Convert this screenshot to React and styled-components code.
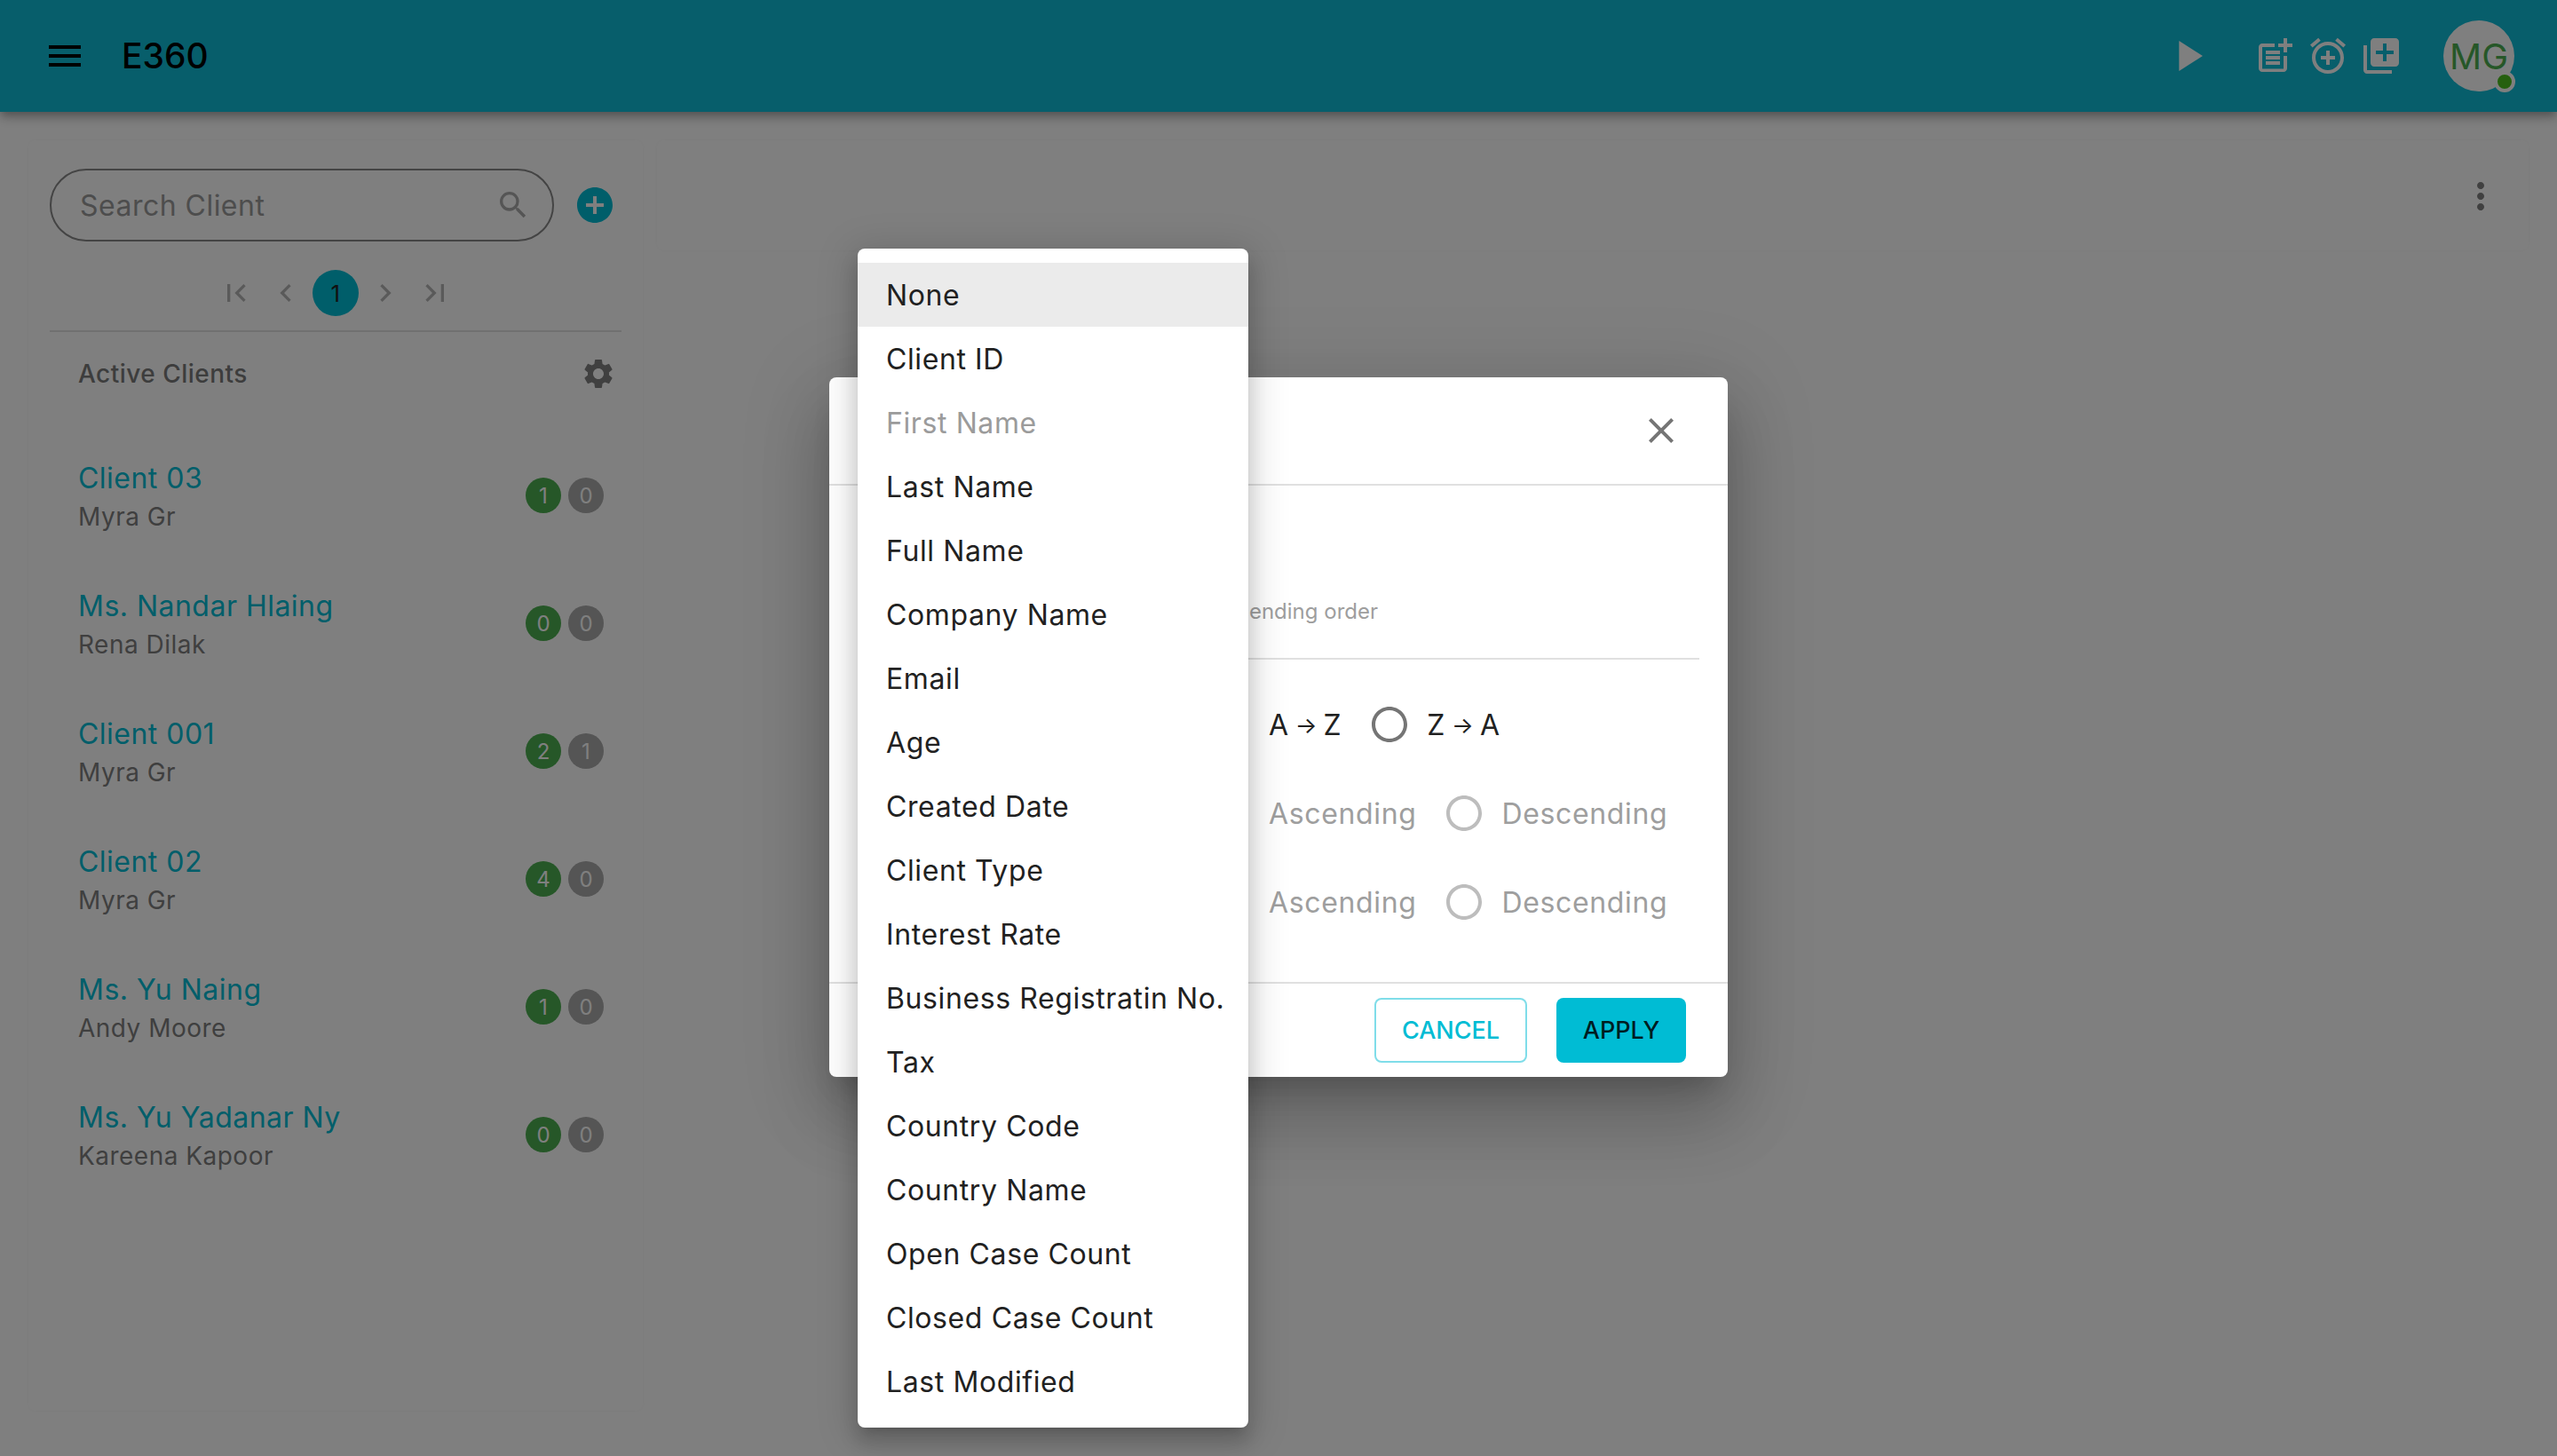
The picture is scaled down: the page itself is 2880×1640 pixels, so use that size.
import React from 'react';
import styled, { createGlobalStyle } from 'styled-components';
import {
    MdMenu,
    MdPlayArrow,
    MdPostAdd,
    MdAlarmAdd,
    MdLibraryAdd,
    MdSearch,
    MdAddCircle,
    MdFirstPage,
    MdLastPage,
    MdChevronLeft,
    MdChevronRight,
    MdSettings,
    MdMoreVert,
    MdClose,
    MdRadioButtonUnchecked
} from 'react-icons/md';

const GlobalStyle = createGlobalStyle`
    html, body {
        margin: 0;
        padding: 0;
        background: #fff;
        font-family: Inter, "Noto Sans", sans-serif;
    }
`;

const Page = styled.div`
    position: relative;
    width: 2880px;
    height: 1640px;
    overflow: hidden;
    background: #fff;
`;

const Header = styled.header`
    display: flex;
    align-items: center;
    height: 126px;
    padding: 0 48px 0 49px;
    box-sizing: border-box;
    background: #0fbcd6;
    box-shadow: 0 4px 8px -2px rgba(0, 0, 0, 0.2), 0 8px 10px 0 rgba(0, 0, 0, 0.14), 0 2px 20px 0 rgba(0, 0, 0, 0.12);
    position: relative;
`;

const Brand = styled.span`
    margin-left: 40px;
    padding-bottom: 2px;
    font-size: 39px;
    font-weight: 500;
    color: #000;
`;

const HeaderIcons = styled.div`
    display: flex;
    align-items: center;
    gap: 12px;
    margin-left: auto;
    color: #fff;
`;

const PlayIcon = styled(MdPlayArrow)`
    margin-right: 33px;
`;

const Avatar = styled.div`
    position: relative;
    display: flex;
    align-items: center;
    justify-content: center;
    width: 80px;
    height: 80px;
    margin-left: 34px;
    border-radius: 50%;
    background: #fff;
    color: #4caf50;
    font-size: 40px;
`;

const StatusDot = styled.span`
    position: absolute;
    right: -1px;
    bottom: -1px;
    width: 16px;
    height: 16px;
    border: 4px solid #fff;
    border-radius: 50%;
    background: #4cc11f;
`;

const Main = styled.main`
    display: flex;
    align-items: flex-start;
    gap: 16px;
    height: 1514px;
    padding: 32px;
    box-sizing: border-box;
    letter-spacing: 0.03em;
`;

const ClientPanel = styled.aside`
    width: 692px;
    height: 1431px;
    padding: 32px 24px;
    box-sizing: border-box;
    border-radius: 8px;
    background: #fff;
    box-shadow: 0 0 4px rgba(0, 0, 0, 0.04);
`;

const DetailPanel = styled.section`
    flex: 1;
    display: flex;
    justify-content: flex-end;
    height: 124px;
    padding: 39px 30px 0 0;
    box-sizing: border-box;
    border-radius: 8px;
    background: #fff;
    box-shadow: 0 0 4px rgba(0, 0, 0, 0.04);
`;

const MoreIcon = styled(MdMoreVert)`
    color: #808080;
`;

const SearchRow = styled.div`
    display: flex;
    align-items: center;
    gap: 22px;
`;

const SearchBox = styled.div`
    display: flex;
    align-items: center;
    justify-content: space-between;
    width: 568px;
    height: 82px;
    padding: 0 24px 0 32px;
    box-sizing: border-box;
    border: 2px solid #888;
    border-radius: 41px;
    font-size: 32px;
    color: #9a9a9a;
`;

const SearchIcon = styled(MdSearch)`
    color: #aaa;
`;

const AddIcon = styled.span`
    display: flex;
    color: #00bcd4;
`;

const Pager = styled.nav`
    display: flex;
    align-items: center;
    justify-content: center;
    gap: 4px;
    margin-top: 32px;
    padding-bottom: 16px;
    border-bottom: 2px solid #e0e0e0;
`;

const PageButton = styled.span`
    display: flex;
    align-items: center;
    justify-content: center;
    width: 52px;
    height: 52px;
    border-radius: 50%;
    font-size: 26px;
    color: ${p => (p.$active ? '#222' : '#b5b5b5')};
    background: ${p => (p.$active ? '#00bcd4' : 'transparent')};
`;

const ListHead = styled.div`
    display: flex;
    align-items: center;
    justify-content: space-between;
    height: 94px;
    padding: 0 6px 0 32px;
    font-size: 28px;
    font-weight: 500;
    color: #7a7a7a;
`;

const GearIcon = styled(MdSettings)`
    color: #808080;
`;

const ClientList = styled.ul`
    margin: 18px 0 0;
    padding: 0;
    list-style: none;
`;

const ClientRow = styled.li`
    display: flex;
    align-items: center;
    justify-content: space-between;
    height: 144px;
    padding: 0 20px 0 32px;
`;

const ClientText = styled.div`
    padding-top: 4px;
`;

const ClientName = styled.div`
    font-size: 32px;
    line-height: 44px;
    color: #00bcd4;
`;

const ClientOwner = styled.div`
    font-size: 28px;
    line-height: 42px;
    color: #7e7e7e;
`;

const Badges = styled.div`
    display: flex;
    gap: 8px;
`;

const Badge = styled.span`
    display: flex;
    align-items: center;
    justify-content: center;
    width: 40px;
    height: 40px;
    border-radius: 50%;
    font-size: 24px;
    letter-spacing: 0;
    color: #fff;
    background: ${p => (p.$open ? '#4caf50' : '#aaa')};
`;

const Overlay = styled.div`
    position: absolute;
    inset: 0;
    display: flex;
    align-items: center;
    justify-content: center;
    background: rgba(0, 0, 0, 0.5);
`;

const Dialog = styled.div`
    display: flex;
    flex-direction: column;
    width: 1012px;
    height: 788px;
    margin-bottom: 2px;
    border-radius: 8px;
    background: #fff;
    box-shadow: 0 22px 30px -14px rgba(0, 0, 0, 0.2), 0 48px 76px 6px rgba(0, 0, 0, 0.14), 0 18px 92px 16px rgba(0, 0, 0, 0.12);
`;

const DialogHead = styled.div`
    display: flex;
    align-items: center;
    justify-content: flex-end;
    height: 122px;
    padding-right: 51px;
    box-sizing: border-box;
    border-bottom: 2px solid #e0e0e0;
    color: #757575;
`;

const DialogBody = styled.div`
    flex: 1;
    padding: 0 32px;
`;

const Hint = styled.div`
    width: 586px;
    height: 194px;
    padding-bottom: 34px;
    box-sizing: border-box;
    display: flex;
    align-items: flex-end;
    justify-content: flex-end;
    font-size: 24px;
    line-height: 36px;
    color: #9e9e9e;
`;

const Rule = styled.div`
    height: 2px;
    background: #e0e0e0;
    margin-bottom: 23px;
`;

const SortRow = styled.div`
    display: flex;
    align-items: center;
    height: 100px;
    padding-left: 463px;
    font-size: 32px;
    letter-spacing: 0.02em;
    color: ${p => (p.$disabled ? '#9e9e9e' : '#212121')};
`;

const Arrow = styled.span`
    margin: 0 7px;
    font-size: 26px;
    letter-spacing: 0;
`;

const RadioIcon = styled(MdRadioButtonUnchecked)`
    margin: 0 18px 0 30px;
    color: ${p => (p.$disabled ? '#bdbdbd' : '#757575')};
`;

const DialogFoot = styled.div`
    display: flex;
    align-items: center;
    justify-content: flex-end;
    gap: 33px;
    height: 107px;
    padding-right: 47px;
    box-sizing: border-box;
    border-top: 2px solid #e0e0e0;
`;

const Button = styled.button`
    height: 73px;
    width: ${p => (p.$primary ? '146px' : '172px')};
    padding: 0;
    border: ${p => (p.$primary ? 'none' : '2px solid rgba(0, 188, 212, 0.5)')};
    border-radius: 8px;
    background: ${p => (p.$primary ? '#00bcd4' : '#fff')};
    color: ${p => (p.$primary ? 'rgba(0, 0, 0, 0.87)' : '#00bcd4')};
    font: 500 27px Inter, sans-serif;
`;

const Menu = styled.ul`
    position: absolute;
    top: 280px;
    left: 966px;
    width: 440px;
    margin: 0;
    padding: 16px 0;
    box-sizing: border-box;
    list-style: none;
    border-radius: 8px;
    background: #fff;
    box-shadow: 0 10px 10px -10px rgba(0, 0, 0, 0.2), 0 16px 20px 2px rgba(0, 0, 0, 0.14), 0 6px 40px 10px rgba(0, 0, 0, 0.12);
`;

const MenuItem = styled.li`
    display: flex;
    align-items: center;
    height: 72px;
    padding-left: 32px;
    font-size: 32px;
    letter-spacing: 0.6px;
    white-space: nowrap;
    color: ${p => (p.$disabled ? '#9b9b9b' : '#212121')};
    background: ${p => (p.$selected ? '#ebebeb' : 'transparent')};
`;

const clients = [
    { name: 'Client 03', owner: 'Myra Gr', open: 1, closed: 0 },
    { name: 'Ms. Nandar Hlaing', owner: 'Rena Dilak', open: 0, closed: 0 },
    { name: 'Client 001', owner: 'Myra Gr', open: 2, closed: 1 },
    { name: 'Client 02', owner: 'Myra Gr', open: 4, closed: 0 },
    { name: 'Ms. Yu Naing', owner: 'Andy Moore', open: 1, closed: 0 },
    { name: 'Ms. Yu Yadanar Ny', owner: 'Kareena Kapoor', open: 0, closed: 0 }
];

const sortFields = [
    'None',
    'Client ID',
    'First Name',
    'Last Name',
    'Full Name',
    'Company Name',
    'Email',
    'Age',
    'Created Date',
    'Client Type',
    'Interest Rate',
    'Business Registratin No.',
    'Tax',
    'Country Code',
    'Country Name',
    'Open Case Count',
    'Closed Case Count',
    'Last Modified'
];

export default function App() {
    return (
        <Page>
            <GlobalStyle />
            <Header>
                <MdMenu size={48} color="#000" />
                <Brand>E360</Brand>
                <HeaderIcons>
                    <PlayIcon size={58} />
                    <MdPostAdd size={48} />
                    <MdAlarmAdd size={48} />
                    <MdLibraryAdd size={48} />
                    <Avatar>
                        MG
                        <StatusDot />
                    </Avatar>
                </HeaderIcons>
            </Header>
            <Main>
                <ClientPanel>
                    <SearchRow>
                        <SearchBox>
                            Search Client
                            <SearchIcon size={40} />
                        </SearchBox>
                        <AddIcon>
                            <MdAddCircle size={48} />
                        </AddIcon>
                    </SearchRow>
                    <Pager>
                        <PageButton><MdFirstPage size={40} /></PageButton>
                        <PageButton><MdChevronLeft size={40} /></PageButton>
                        <PageButton $active>1</PageButton>
                        <PageButton><MdChevronRight size={40} /></PageButton>
                        <PageButton><MdLastPage size={40} /></PageButton>
                    </Pager>
                    <ListHead>
                        Active Clients
                        <GearIcon size={40} />
                    </ListHead>
                    <ClientList>
                        {clients.map(client => (
                            <ClientRow key={client.name}>
                                <ClientText>
                                    <ClientName>{client.name}</ClientName>
                                    <ClientOwner>{client.owner}</ClientOwner>
                                </ClientText>
                                <Badges>
                                    <Badge $open>{client.open}</Badge>
                                    <Badge>{client.closed}</Badge>
                                </Badges>
                            </ClientRow>
                        ))}
                    </ClientList>
                </ClientPanel>
                <DetailPanel>
                    <MoreIcon size={48} />
                </DetailPanel>
            </Main>
            <Overlay>
                <Dialog>
                    <DialogHead>
                        <MdClose size={48} />
                    </DialogHead>
                    <DialogBody>
                        <Hint>ascending order</Hint>
                        <Rule />
                        <SortRow>
                            A<Arrow>→</Arrow>Z
                            <RadioIcon size={48} />
                            Z<Arrow>→</Arrow>A
                        </SortRow>
                        <SortRow $disabled>
                            Ascending
                            <RadioIcon size={48} $disabled />
                            Descending
                        </SortRow>
                        <SortRow $disabled>
                            Ascending
                            <RadioIcon size={48} $disabled />
                            Descending
                        </SortRow>
                    </DialogBody>
                    <DialogFoot>
                        <Button>CANCEL</Button>
                        <Button $primary>APPLY</Button>
                    </DialogFoot>
                </Dialog>
                <Menu>
                    {sortFields.map(field => (
                        <MenuItem
                            key={field}
                            $selected={field === 'None'}
                            $disabled={field === 'First Name'}
                        >
                            {field}
                        </MenuItem>
                    ))}
                </Menu>
            </Overlay>
        </Page>
    );
}
